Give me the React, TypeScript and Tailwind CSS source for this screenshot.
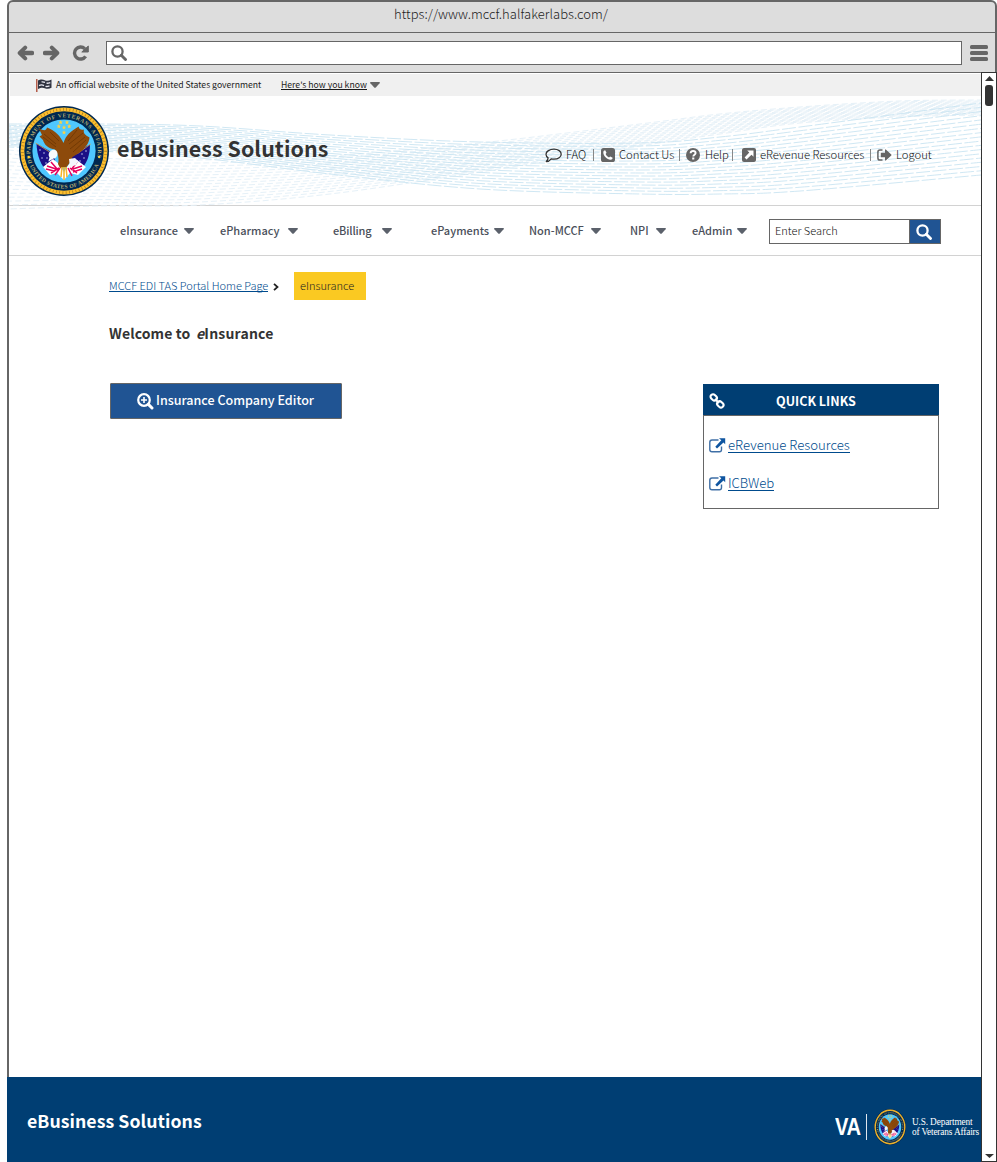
import { useId } from "react";
import type { ReactNode } from "react";

type Pt = [number, number];

/** Smooth open curve through the given points (Catmull-Rom as cubic segments). */
function curve(pts: Pt[]): string {
  let d = `M${pts[0][0]} ${pts[0][1].toFixed(2)}`;
  for (let i = 0; i < pts.length - 1; i++) {
    const p0 = pts[Math.max(i - 1, 0)];
    const p1 = pts[i];
    const p2 = pts[i + 1];
    const p3 = pts[Math.min(i + 2, pts.length - 1)];
    d += `C${(p1[0] + (p2[0] - p0[0]) / 6).toFixed(2)} ${(p1[1] + (p2[1] - p0[1]) / 6).toFixed(2)} ${(
      p2[0] -
      (p3[0] - p1[0]) / 6
    ).toFixed(2)} ${(p2[1] - (p3[1] - p1[1]) / 6).toFixed(2)} ${p2[0]} ${p2[1].toFixed(2)}`;
  }
  return d;
}

function blend(top: Pt[], bottom: number[], count: number): string[] {
  return Array.from({ length: count }, (_, i) => {
    const t = i / (count - 1);
    return curve(top.map(([x, y], k): Pt => [x, y + (bottom[k] - y) * t]));
  });
}

const blueWaves = blend(
  [[8, 124], [100, 124], [200, 126], [330, 135], [480, 142], [640, 143], [720, 137], [800, 127], [981, 103]],
  [147, 151, 158, 174, 189, 194, 194, 191, 175],
  18,
);

const paleWaves = blend(
  [[8, 150], [100, 158], [200, 160], [330, 156], [480, 143], [640, 124], [720, 114], [800, 107], [900, 101], [981, 100]],
  [209, 206, 205, 194, 172, 146, 134, 123, 117, 115],
  16,
);

function Waves() {
  return (
    <svg className="absolute left-0 top-0" width="972" height="116" viewBox="9 96 972 116" fill="none">
      <g stroke="#e6f1f8" strokeWidth="1">
        {paleWaves.map((d, i) => (
          <path key={i} d={d} strokeDasharray="6 3" strokeDashoffset={i * 2.2} />
        ))}
      </g>
      <g stroke="#c9e4f2" strokeWidth="0.9">
        {blueWaves.map((d, i) => (
          <path key={i} d={d} strokeDasharray="14 2.500" strokeDashoffset={i * 5.3} />
        ))}
      </g>
    </svg>
  );
}

function Star({ x, y }: { x: number; y: number }) {
  return (
    <path
      transform={`translate(${x} ${y})`}
      d="M0-2.4L.6-.8 2.3-.7 1 .3 1.4 2 0 1.1-1.4 2-1 .3-2.3-.7-.6-.8Z"
      fill="#ffd23f"
    />
  );
}

function Seal({ className }: { className: string }) {
  const id = useId();
  return (
    <svg className={className} viewBox="0 0 90 90" preserveAspectRatio="none">
      <defs>
        <path id={`${id}t`} d="M14.9 60.5A33.8 33.8 0 1 1 75.1 60.5" />
        <path id={`${id}b`} d="M8.4 51A37 37 0 0 0 81.6 51" />
      </defs>
      <circle cx="45" cy="45" r="45" fill="#002850" />
      <circle cx="45" cy="45" r="41.6" fill="none" stroke="#fdbf2d" strokeWidth="3.800" />
      <circle cx="45" cy="45" r="41.6" fill="none" stroke="#a87820" strokeWidth="2.800" strokeDasharray="0.7 2.6" />
      <circle cx="45" cy="45" r="31.6" fill="#4fc8ff" />
      <g fill="#b9ad72" className="font-['Liberation_Serif',serif] text-[5.6px] font-bold">
        <text textLength="124" lengthAdjust="spacing">
          <textPath href={`#${id}t`} startOffset="4">DEPARTMENT OF VETERANS AFFAIRS</textPath>
        </text>
        <text textLength="88" lengthAdjust="spacing">
          <textPath href={`#${id}b`} startOffset="9">UNITED STATES OF AMERICA</textPath>
        </text>
      </g>
      <circle cx="9.800" cy="51" r="1.200" fill="#ffd23f" />
      <circle cx="80.200" cy="51" r="1.200" fill="#ffd23f" />
      <Star x={45} y={21.5} />
      <Star x={39.8} y={20.3} />
      <Star x={50.2} y={20.3} />
      <Star x={41.6} y={16.3} />
      <Star x={48} y={16.3} />
      <Star x={45} y={26.5} />
      <path d="M17.5 37.5L34 47 38 62 29 66C22 60 18 50 17.5 37.5Z" fill="#1b0f85" />
      <path d="M71 38.5L53 48 52 62 61 64C68 58 71 49 71 38.5Z" fill="#1b0f85" />
      <path d="M16.6 37l14 9M71.8 38l-14 10" stroke="#d9a441" strokeWidth=".8" />
      <g fill="#dfe6ff">
        <circle cx="21" cy="44" r=".7" />
        <circle cx="25" cy="47" r=".7" />
        <circle cx="23" cy="52" r=".7" />
        <circle cx="28" cy="52" r=".7" />
        <circle cx="27" cy="57" r=".7" />
        <circle cx="67" cy="45" r=".7" />
        <circle cx="63" cy="48" r=".7" />
        <circle cx="65" cy="52" r=".7" />
        <circle cx="61" cy="55" r=".7" />
      </g>
      <path d="M24 61L34 53 40 58 45 66 50 58 58 54 67 61 59 69 51 67 45 74 38 67 31 69Z" fill="#fff" />
      <path
        d="M28 60l9 3M32 56l7 8M27 63l8 2M32 67l8-5M36 69l5-7M63 60l-9 3M58 56l-6 8M63 63l-9 3M58 67l-7-5M53 70l-4-8"
        stroke="#e6005c"
        strokeWidth="1.5"
      />
      <path
        d="M19.6 22C25 25 27 25 28 21.5C36 24 42 31 44.5 37C47 29 51 26 59.6 20.5C60 24 63 24 65 23.5C64 27 66 29 70.5 31.5C70 38 66 42 60 47L53.5 51C52 55 50 58 47.5 61L41 62 39 58C40 54 39.5 51 38.5 48L36 43.5C29 43 25 38 24 34L20.5 30.5 23 29Z"
        fill="#8d4a0b"
      />
      <path
        d="M25 28l12 10M24 31l13 10M31 26l9 9M64 27L50 38M66 31L51 43M58 24l-9 11M67 34L54 46"
        stroke="#6b3503"
        strokeWidth=".8"
      />
      <path d="M31.5 45c3-2.500 7-1 7 2.500c0 3-2 5-4 5l-5 3c0-2 1-3 1-4c-1.500-2-1-5 1-6.500Z" fill="#f8fafc" />
      <path d="M50 53l6-1 3 3-2 4-6 2Z" fill="#f4f4fb" />
      <path d="M43 61l-1 10M45 61v13M47 61l1 10" stroke="#f6b526" strokeWidth="1.5" />
    </svg>
  );
}

function Caret({ className = "fill-[#5b616b]" }: { className?: string }) {
  return (
    <svg className={`shrink-0 ${className}`} width="10" height="6" viewBox="0 0 10 6">
      <path d="M.6 0H9.400Q10.300.4 9.600 1.200L5.800 5.500Q5 6.200 4.200 5.500L.4 1.200Q-.3.4.6 0Z" />
    </svg>
  );
}

function Arrow({ className = "" }: { className?: string }) {
  return (
    <svg className={className} width="17" height="16" viewBox="0 0 17 16" fill="none" stroke="#666" strokeWidth="4">
      <path d="M15 8H4" strokeWidth="4.400" strokeLinecap="round" />
      <path d="M8.200 2.600L2.700 8l5.500 5.400" strokeLinecap="round" strokeLinejoin="round" />
    </svg>
  );
}

function Magnifier({ className, size }: { className: string; size: string }) {
  return (
    <svg className={`${size} ${className}`} viewBox="0 0 16 16" fill="none">
      <circle cx="6.500" cy="6.500" r="5.100" strokeWidth="2.300" />
      <path d="M10.300 10.300l4.200 4.200" strokeWidth="2.900" strokeLinecap="round" />
    </svg>
  );
}

function FlagIcon() {
  return (
    <svg width="16" height="13" viewBox="0 0 16 13" fill="none">
      <path d="M.8 0v13" stroke="#a8432e" strokeWidth="1.300" />
      <path d="M2 1.500C5-.2 7 .4 8.800 1.300S13 2 15.500.6V8.800C13 10.300 10.500 10 8.800 9.200S5 8.300 2 10Z" fill="#2f3340" />
      <path d="M5.500 3c1.300-.5 2.500 0 3.500.4M3 6.600c2-1 3.500-.8 5 0M10.500 4.200c1.300.2 2.200 0 3.800-.6M9.500 7.400c1.300.3 2.500.1 4-.5" stroke="#e8e8f0" strokeWidth="1.300" />
    </svg>
  );
}

function CommentIcon() {
  return (
    <svg className="mt-[2px]" width="17" height="15" viewBox="0 0 17 15" fill="none" stroke="#333" strokeWidth="1.300" strokeLinejoin="round">
      <path d="M9 1.200c4.200 0 7.200 2.200 7.200 5s-3 5-7.200 5c-1 0-2-.1-2.800-.4C5 12.300 3.200 13.600 1.300 13.600c1.200-1 1.700-2.200 1.800-3.700C1.800 9 1 7.700 1 6.200c0-2.800 3.700-5 8-5Z" />
    </svg>
  );
}

function PhoneIcon() {
  return (
    <svg width="14" height="14" viewBox="0 0 14 14">
      <rect width="14" height="14" rx="2.600" fill="#666" />
      <path
        d="M4.200 2.300L5.500 4.700 4.600 6C5.200 7.500 6.400 8.800 8 9.500L9.200 8.500 11.600 9.700C11.700 10.700 10.800 11.700 9.600 11.700C6 11.700 2.300 8 2.300 4.300C2.300 3.200 3.200 2.300 4.200 2.300Z"
        fill="#fff"
      />
    </svg>
  );
}

function HelpIcon() {
  return (
    <svg width="14" height="14" viewBox="0 0 14 14" fill="none">
      <circle cx="7" cy="7" r="7" fill="#666" />
      <path d="M4.600 5.300C4.700 3.700 5.700 3 7.100 3c1.400 0 2.500.8 2.500 2.100C9.600 6.800 7.300 6.800 7.300 8.600" stroke="#fff" strokeWidth="1.900" />
      <rect x="6.200" y="9.500" width="2.100" height="2" fill="#fff" />
    </svg>
  );
}

function ShareIcon() {
  return (
    <svg className="mt-px" width="14" height="14" viewBox="0 0 14 14" fill="none">
      <rect width="14" height="14" rx="2" fill="#666" />
      <path d="M5.200 2.500H11.500V8.800L9.500 6.800 4.500 11.500 2.600 9.600 7.300 4.600Z" fill="#fff" />
    </svg>
  );
}

function LogoutIcon() {
  return (
    <svg className="mt-px" width="15" height="12" viewBox="0 0 15 12" fill="none">
      <path d="M5.500.9H3Q.9.9.9 3V9Q.9 11.100 3 11.100H5.500" stroke="#666" strokeWidth="1.500" />
      <path d="M3.800 3.800H8V.6Q8.300.2 8.800.6L14.300 5.500Q14.700 6 14.300 6.500L8.800 11.400Q8.300 11.800 8 11.400V8.200H3.800Z" fill="#666" />
    </svg>
  );
}

function ExternalIcon() {
  return (
    <svg width="17" height="15" viewBox="0 0 17 15" fill="none">
      <path d="M9.500 2H3Q.8 2 .8 4.200V11.500Q.8 13.700 3 13.700H10.500Q12.500 13.700 12.500 11.500V8.500" stroke="#3f6fa6" strokeWidth="1.400" />
      <path d="M10 .3H16.200V6.200L14.500 4.500 8 10.500 6.300 8.800 12.300 2.300Z" fill="#0f55a0" />
    </svg>
  );
}

function ChainIcon() {
  return (
    <svg width="16" height="16" viewBox="0 0 16 16" fill="none" stroke="#fff" strokeWidth="2.100">
      <rect x="1.300" y="1.900" width="6.800" height="5" rx="2.400" transform="rotate(45 4.700 4.400)" />
      <rect x="7.900" y="8.900" width="6.800" height="5" rx="2.400" transform="rotate(45 11.300 11.400)" />
      <path d="M6 6l4 4" />
    </svg>
  );
}

function HeaderLink({
  icon,
  label,
  width,
  link,
}: {
  icon: ReactNode;
  label: string;
  width: string;
  link: string;
}) {
  return (
    <div className={`flex shrink-0 items-center ${width}`}>
      <a className={`flex h-[12px] shrink-0 items-center ${link}`}>
        {icon}
        <span>{label}</span>
      </a>
    </div>
  );
}

function NavItem({ label, cell, text }: { label: string; cell: string; text: string }) {
  return (
    <div className={`flex shrink-0 items-center ${cell}`}>
      <span className={text}>{label}</span>
      <Caret />
    </div>
  );
}

export default function App() {
  return (
    <div className="flex h-[1162px] w-[997px] flex-col overflow-hidden whitespace-nowrap bg-white pl-[7px] font-['Noto_Sans_CJK_SC',sans-serif] text-[#333]">
      {/* Browser chrome */}
      <div className="flex h-[73px] shrink-0 flex-col rounded-t-[6px] border-2 border-b border-[#666] bg-[#ddd]">
        <div className="flex h-[31px] items-center justify-center border-b border-[#666] pb-[7px] text-[13px] font-light leading-none tracking-[0.03px] text-[#222]">
          <span className="pr-[2px]">https://www.mccf.halfakerlabs.com/</span>
        </div>
        <div className="flex flex-1 items-center pl-[8px]">
          <Arrow />
          <Arrow className="ml-[9px] rotate-180" />
          <svg className="ml-[12px]" width="18" height="16" viewBox="0 0 18 16" fill="none">
            <path d="M12.800 3.800A6 6 0 1 0 13.600 11.300" stroke="#666" strokeWidth="3.400" />
            <path d="M16.300 1V7H9.800Z" fill="#666" stroke="#666" strokeLinejoin="round" />
          </svg>
          <div className="ml-[16px] flex h-[24px] w-[856px] items-center border border-[#666] bg-white pl-[4px]">
            <Magnifier className="stroke-[#666]" size="h-[16px] w-[16px]" />
          </div>
          <div className="ml-[8px] flex flex-col gap-[2px]">
            <span className="h-[4px] w-[18px] rounded-[1.500px] bg-[#666]" />
            <span className="h-[4px] w-[18px] rounded-[1.500px] bg-[#666]" />
            <span className="h-[4px] w-[18px] rounded-[1.500px] bg-[#666]" />
          </div>
        </div>
      </div>

      <div className="flex min-h-0 flex-1">
        <div className="flex w-[974px] flex-col">
          <div className="flex flex-1 flex-col border-l-2 border-[#666]">
            {/* Government banner */}
            <div className="ml-px mt-px flex h-[22px] items-center bg-[#f0f0f0] pl-[26px] text-[8.66px] leading-none text-[#1b1b1b]">
              <FlagIcon />
              <span className="ml-[4px] w-[225px] pb-[2px]">An official website of the United States government</span>
              <span className="mb-px border-b border-[#1b1b1b] leading-[9px]">Here&apos;s how you know</span>
              <Caret className="ml-[3px] fill-[#666]" />
            </div>

            {/* Masthead */}
            <header className="relative flex h-[110px] items-center border-b border-[#d2d2d2]">
              <Waves />
              <Seal className="relative ml-[10px] h-[90px] w-[90px]" />
              <h1 className="relative ml-[8px] w-[428px] pb-[6px] text-[21.400px] font-bold leading-none tracking-[0.06px]">
                eBusiness Solutions
              </h1>
              <nav className="relative flex pt-[8px] text-[11.300px] font-light leading-none text-[#111]">
                <HeaderLink icon={<CommentIcon />} label="FAQ" width="w-[56px]" link="w-[49px] gap-[4px] border-r border-[#888]" />
                <HeaderLink icon={<PhoneIcon />} label="Contact Us" width="w-[85px]" link="w-[79px] gap-[4px] border-r border-[#888]" />
                <HeaderLink icon={<HelpIcon />} label="Help" width="w-[56px]" link="w-[47px] gap-[5px] border-r border-[#888]" />
                <HeaderLink icon={<ShareIcon />} label="eRevenue Resources" width="w-[135px]" link="w-[129px] gap-[4px] border-r border-[#888]" />
                <HeaderLink icon={<LogoutIcon />} label="Logout" width="w-[60px]" link="gap-[4px]" />
              </nav>
            </header>

            {/* Primary navigation */}
            <div className="flex h-[50px] items-center border-b border-[#d2d2d2] pl-[111px] text-[11px] font-medium leading-none text-[#4a4f5a]">
              <NavItem label="eInsurance" cell="w-[100px]" text="w-[64px] tracking-[0.05px]" />
              <NavItem label="ePharmacy" cell="w-[113px]" text="w-[68px]" />
              <NavItem label="eBilling" cell="w-[98px] pt-px" text="w-[49px] pb-px tracking-[-0.15px]" />
              <NavItem label="ePayments" cell="w-[98px]" text="w-[63px]" />
              <NavItem label="Non-MCCF" cell="w-[101px]" text="w-[62px]" />
              <NavItem label="NPI" cell="w-[62px]" text="w-[26px]" />
              <NavItem label="eAdmin" cell="w-[77px]" text="w-[45px]" />
              <div className="mt-[2px] flex h-[25px] w-[172px] border border-[#666] bg-white">
                <span className="flex w-[139px] items-center pb-[2px] pl-[5px] text-[11px] font-light text-[#111]">
                  Enter Search
                </span>
                <span className="flex flex-1 items-center justify-center border-l border-[#666] bg-[#205493] pr-[2px]">
                  <Magnifier className="stroke-white" size="h-[16px] w-[16px]" />
                </span>
              </div>
            </div>

            <main className="flex flex-col pl-[100px]">
              <div className="mt-[16px] flex h-[28px] items-center text-[11px] font-light leading-none">
                <a className="mb-px w-[159px] border-b border-[#004b8d] leading-[12px] text-[#004b8d]">
                  MCCF EDI TAS Portal Home Page
                </a>
                <svg className="ml-[5px] mt-[2px]" width="6" height="8" viewBox="0 0 6 8" fill="none">
                  <path d="M1 .8L4.500 4 1 7.200" stroke="#222" strokeWidth="1.800" />
                </svg>
                <span className="ml-[15px] flex h-[28px] w-[72px] items-center bg-[#fac922] pb-[2px] pl-[6px] text-[#222]">
                  eInsurance
                </span>
              </div>

              <h2 className="mt-[25px] flex h-[16px] items-center text-[14px] font-bold leading-none tracking-[0.2px]">
                <span className="w-[87px] tracking-[0.1px]">Welcome to</span>
                <span>
                  <i>e</i>Insurance
                </span>
              </h2>

              <div className="mt-[42px] flex items-start">
                <button className="ml-px flex h-[36px] w-[232px] items-center rounded-[1px] border border-[#666] bg-[#205493] pl-[26px] text-[12.550px] font-medium leading-none text-white">
                  <svg width="17" height="17" viewBox="0 0 17 17" fill="none" stroke="#fff">
                    <circle cx="7" cy="7" r="5.800" strokeWidth="2.200" />
                    <path d="M11.400 11.400l3.600 3.600" strokeWidth="3" strokeLinecap="round" />
                    <path d="M7 4v6M4 7h6" strokeWidth="1.600" />
                  </svg>
                  <span className="ml-[2px] pb-[1px]">Insurance Company Editor</span>
                </button>

                <section className="ml-[361px] mt-px h-[125px] w-[236px] border border-[#666]">
                  <div className="-mx-px -mt-px flex h-[32px] items-center border-b border-[#666] bg-[#003e73] pl-[6px] pt-[3px] text-[12.550px] font-bold leading-none text-white">
                    <ChainIcon />
                    <span className="ml-[51px]">QUICK LINKS</span>
                  </div>
                  <ul className="flex flex-col gap-[23px] pl-[5px] pt-[22px] text-[13.200px] font-light leading-none text-[#004b8d]">
                    <li className="flex h-[15px] items-center gap-[2px]">
                      <ExternalIcon />
                      <a className="border-b border-[#004b8d] leading-[14px]">eRevenue Resources</a>
                    </li>
                    <li className="flex h-[15px] items-center gap-[2px]">
                      <ExternalIcon />
                      <a className="border-b border-[#004b8d] leading-[14px] tracking-[-0.1px]">ICBWeb</a>
                    </li>
                  </ul>
                </section>
              </div>
            </main>
          </div>

          {/* Footer */}
          <footer className="flex h-[85px] shrink-0 items-center bg-[#003e73] text-white">
            <span className="ml-[20px] w-[808px] pt-[3px] text-[17.700px] font-bold leading-none tracking-[0.05px]">
              eBusiness Solutions
            </span>
            <div className="flex items-center pt-[15px]">
              <span className="flex w-[25px] origin-left scale-x-[0.84] font-['Liberation_Sans',sans-serif] text-[24px] font-bold leading-none tracking-[-0.500px]">
                VA
              </span>
              <span className="ml-[6px] h-[26px] w-px bg-[#dfe6ee]" />
              <Seal className="ml-[7px] h-[36px] w-[32px]" />
              <span className="ml-[6px] font-['Liberation_Serif',serif] text-[9.300px] leading-[10.500px] tracking-[-0.150px]">
                U.S. Department
                <br />
                of Veterans Affairs
              </span>
            </div>
          </footer>
        </div>

        {/* Scrollbar */}
        <div className="-mt-px flex w-[16px] flex-col items-center border border-[#333] bg-white">
          <svg className="mt-[3px]" width="9" height="5" viewBox="0 0 9 5">
            <path d="M4.500 0L9 5H0Z" fill="#333" />
          </svg>
          <span className="mt-[4px] h-[21px] w-[8px] rounded-[3px] bg-[#333]" />
          <svg className="mb-[3px] mt-auto" width="9" height="4" viewBox="0 0 9 4">
            <path d="M4.500 4L9 0H0Z" fill="#333" />
          </svg>
        </div>
      </div>
    </div>
  );
}
